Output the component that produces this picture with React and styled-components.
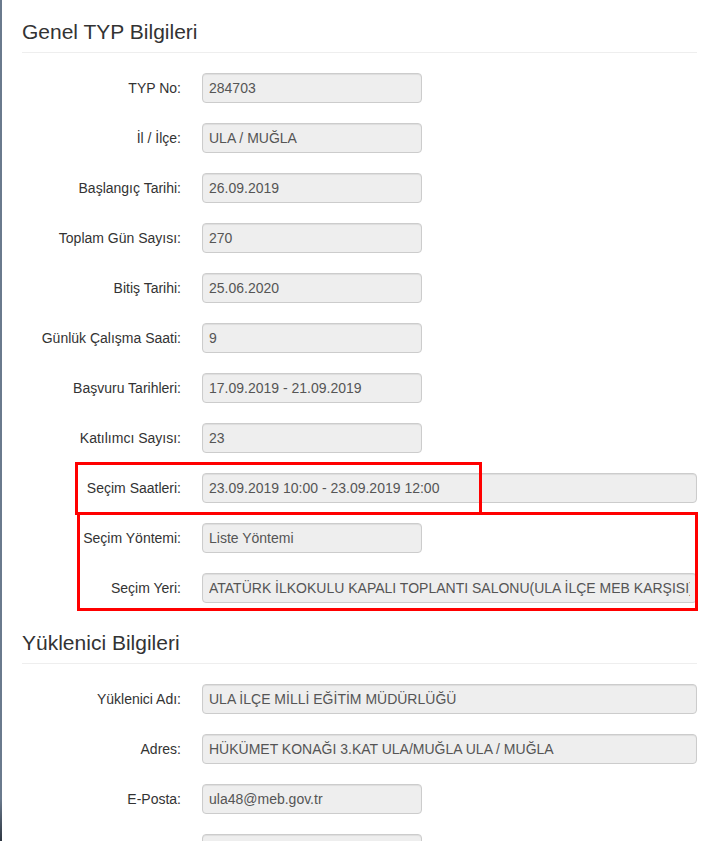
import React from "react";
import styled, { createGlobalStyle } from "styled-components";

const GlobalStyle = createGlobalStyle`
  html, body {
    margin: 0;
    padding: 0;
    background: #fff;
  }
  body {
    font-family: "Liberation Sans", Arial, sans-serif;
    color: #333;
  }
`;

const Page = styled.div`
  position: relative;
  height: 841px;
  padding: 12px 14px 0 22px;
  box-sizing: border-box;
  overflow: hidden;

  &::before {
    content: "";
    position: absolute;
    left: 0;
    top: 0;
    bottom: 0;
    width: 2px;
    background: linear-gradient(to bottom, #6a7a8d 0%, #6a7a8d 95%, #2e3742 100%);
  }
`;

const Section = styled.section`
  display: flow-root;
`;

const Heading = styled.h3`
  margin: 8px 0 0;
  font-size: 21px;
  line-height: 23px;
  font-weight: 400;
  color: #333;
`;

const Rule = styled.hr`
  margin: 9px 0 20px;
  border: 0;
  border-top: 1px solid #eee;
`;

const Row = styled.div`
  display: grid;
  grid-template-columns: 159px 1fr;
  column-gap: 21px;
  align-items: center;
  margin-bottom: 20px;
`;

const Label = styled.label`
  text-align: right;
  font-size: 14px;
  color: #333;
  white-space: nowrap;
`;

const Field = styled.input`
  box-sizing: border-box;
  width: ${(p) => (p.$wide ? "495px" : "220px")};
  height: 30px;
  padding: 0 6px;
  border: 1px solid #ccc;
  border-radius: 4px;
  background: #eee;
  font-family: "Liberation Sans", Arial, sans-serif;
  font-size: 14px;
  color: #555;
  box-shadow: inset 0 1px 1px rgba(0, 0, 0, 0.075);
  outline: none;
`;

const Marker = styled.div`
  position: absolute;
  left: ${(p) => p.$left}px;
  top: ${(p) => p.$top}px;
  width: ${(p) => p.$width}px;
  height: ${(p) => p.$height}px;
  box-sizing: border-box;
  border: 3px solid #f00;
  pointer-events: none;
`;

const genel = [
  ["TYP No:", "284703"],
  ["İl / İlçe:", "ULA / MUĞLA"],
  ["Başlangıç Tarihi:", "26.09.2019"],
  ["Toplam Gün Sayısı:", "270"],
  ["Bitiş Tarihi:", "25.06.2020"],
  ["Günlük Çalışma Saati:", "9"],
  ["Başvuru Tarihleri:", "17.09.2019 - 21.09.2019"],
  ["Katılımcı Sayısı:", "23"],
  ["Seçim Saatleri:", "23.09.2019 10:00 - 23.09.2019 12:00", true],
  ["Seçim Yöntemi:", "Liste Yöntemi"],
  ["Seçim Yeri:", "ATATÜRK İLKOKULU KAPALI TOPLANTI SALONU(ULA İLÇE MEB KARŞISI)", true],
];

const yuklenici = [
  ["Yüklenici Adı:", "ULA İLÇE MİLLİ EĞİTİM MÜDÜRLÜĞÜ", true],
  ["Adres:", "HÜKÜMET KONAĞI 3.KAT ULA/MUĞLA ULA / MUĞLA", true],
  ["E-Posta:", "ula48@meb.gov.tr"],
  ["", ""],
];

function InfoSection({ title, rows }) {
  return (
    <Section>
      <Heading>{title}</Heading>
      <Rule />
      {rows.map(([label, value, wide], i) => (
        <Row key={i}>
          <Label>{label}</Label>
          <Field readOnly value={value} $wide={wide} />
        </Row>
      ))}
    </Section>
  );
}

export default function App() {
  return (
    <>
      <GlobalStyle />
      <Page>
        <InfoSection title="Genel TYP Bilgileri" rows={genel} />
        <InfoSection title="Yüklenici Bilgileri" rows={yuklenici} />
        <Marker $left={75} $top={462} $width={407} $height={53} />
        <Marker $left={77} $top={512} $width={621} $height={99} />
      </Page>
    </>
  );
}
